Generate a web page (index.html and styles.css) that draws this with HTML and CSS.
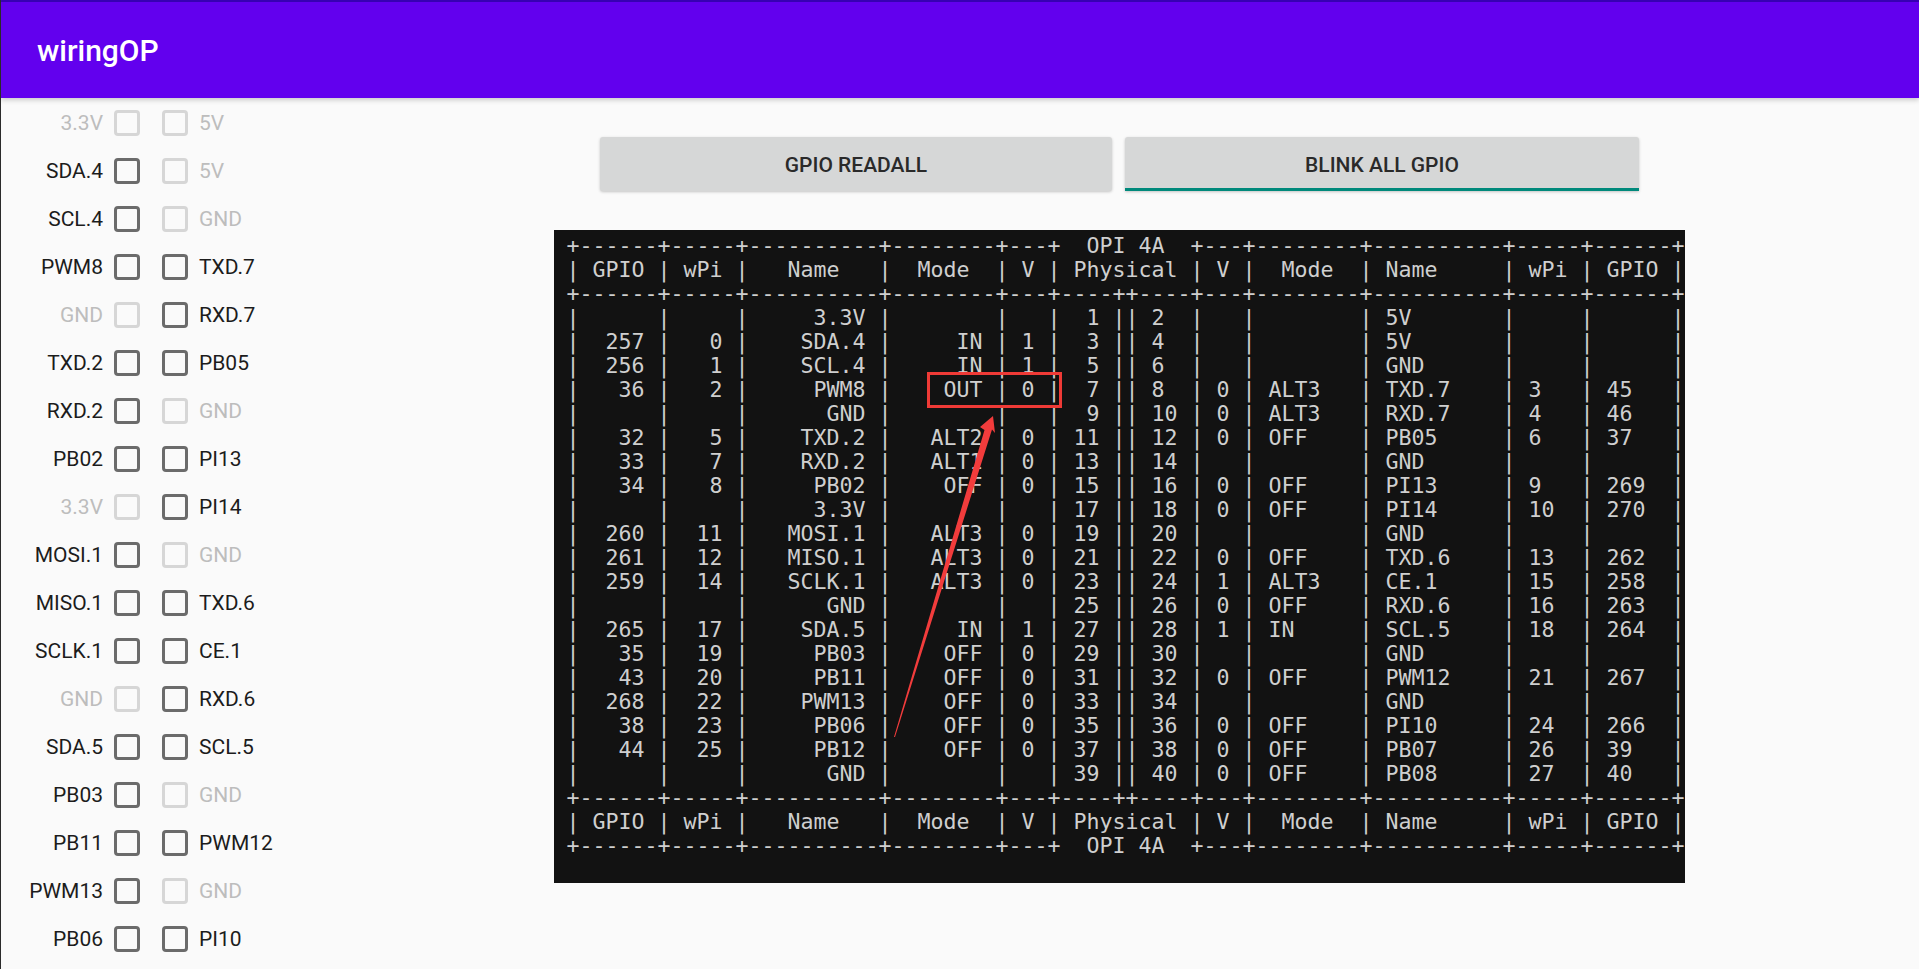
FILE: index.html
```html
<!DOCTYPE html>
<html lang="en">
<head>
<meta charset="utf-8">
<title>wiringOP</title>
<link rel="stylesheet" href="styles.css">
</head>
<body>
<header class="appbar"><h1 class="title">wiringOP</h1></header>
<main class="main">
<section class="pins">
<div class="pin"><span class="lbl off">3.3V</span><span class="box off"></span><span class="box off"></span><span class="lbl off">5V</span></div>
<div class="pin"><span class="lbl">SDA.4</span><span class="box"></span><span class="box off"></span><span class="lbl off">5V</span></div>
<div class="pin"><span class="lbl">SCL.4</span><span class="box"></span><span class="box off"></span><span class="lbl off">GND</span></div>
<div class="pin"><span class="lbl">PWM8</span><span class="box"></span><span class="box"></span><span class="lbl">TXD.7</span></div>
<div class="pin"><span class="lbl off">GND</span><span class="box off"></span><span class="box"></span><span class="lbl">RXD.7</span></div>
<div class="pin"><span class="lbl">TXD.2</span><span class="box"></span><span class="box"></span><span class="lbl">PB05</span></div>
<div class="pin"><span class="lbl">RXD.2</span><span class="box"></span><span class="box off"></span><span class="lbl off">GND</span></div>
<div class="pin"><span class="lbl">PB02</span><span class="box"></span><span class="box"></span><span class="lbl">PI13</span></div>
<div class="pin"><span class="lbl off">3.3V</span><span class="box off"></span><span class="box"></span><span class="lbl">PI14</span></div>
<div class="pin"><span class="lbl">MOSI.1</span><span class="box"></span><span class="box off"></span><span class="lbl off">GND</span></div>
<div class="pin"><span class="lbl">MISO.1</span><span class="box"></span><span class="box"></span><span class="lbl">TXD.6</span></div>
<div class="pin"><span class="lbl">SCLK.1</span><span class="box"></span><span class="box"></span><span class="lbl">CE.1</span></div>
<div class="pin"><span class="lbl off">GND</span><span class="box off"></span><span class="box"></span><span class="lbl">RXD.6</span></div>
<div class="pin"><span class="lbl">SDA.5</span><span class="box"></span><span class="box"></span><span class="lbl">SCL.5</span></div>
<div class="pin"><span class="lbl">PB03</span><span class="box"></span><span class="box off"></span><span class="lbl off">GND</span></div>
<div class="pin"><span class="lbl">PB11</span><span class="box"></span><span class="box"></span><span class="lbl">PWM12</span></div>
<div class="pin"><span class="lbl">PWM13</span><span class="box"></span><span class="box off"></span><span class="lbl off">GND</span></div>
<div class="pin"><span class="lbl">PB06</span><span class="box"></span><span class="box"></span><span class="lbl">PI10</span></div>
</section>
<section class="content">
<div class="actions">
<button class="btn" type="button">GPIO READALL</button>
<button class="btn focused" type="button">BLINK ALL GPIO</button>
</div>
<div class="terminal">
<pre class="table">+------+-----+----------+--------+---+  OPI 4A  +---+--------+----------+-----+------+
| GPIO | wPi |   Name   |  Mode  | V | Physical | V |  Mode  | Name     | wPi | GPIO |
+------+-----+----------+--------+---+----++----+---+--------+----------+-----+------+
|      |     |     3.3V |        |   |  1 || 2  |   |        | 5V       |     |      |
|  257 |   0 |    SDA.4 |     IN | 1 |  3 || 4  |   |        | 5V       |     |      |
|  256 |   1 |    SCL.4 |     IN | 1 |  5 || 6  |   |        | GND      |     |      |
|   36 |   2 |     PWM8 |    OUT | 0 |  7 || 8  | 0 | ALT3   | TXD.7    | 3   | 45   |
|      |     |      GND |        |   |  9 || 10 | 0 | ALT3   | RXD.7    | 4   | 46   |
|   32 |   5 |    TXD.2 |   ALT2 | 0 | 11 || 12 | 0 | OFF    | PB05     | 6   | 37   |
|   33 |   7 |    RXD.2 |   ALT1 | 0 | 13 || 14 |   |        | GND      |     |      |
|   34 |   8 |     PB02 |    OFF | 0 | 15 || 16 | 0 | OFF    | PI13     | 9   | 269  |
|      |     |     3.3V |        |   | 17 || 18 | 0 | OFF    | PI14     | 10  | 270  |
|  260 |  11 |   MOSI.1 |   ALT3 | 0 | 19 || 20 |   |        | GND      |     |      |
|  261 |  12 |   MISO.1 |   ALT3 | 0 | 21 || 22 | 0 | OFF    | TXD.6    | 13  | 262  |
|  259 |  14 |   SCLK.1 |   ALT3 | 0 | 23 || 24 | 1 | ALT3   | CE.1     | 15  | 258  |
|      |     |      GND |        |   | 25 || 26 | 0 | OFF    | RXD.6    | 16  | 263  |
|  265 |  17 |    SDA.5 |     IN | 1 | 27 || 28 | 1 | IN     | SCL.5    | 18  | 264  |
|   35 |  19 |     PB03 |    OFF | 0 | 29 || 30 |   |        | GND      |     |      |
|   43 |  20 |     PB11 |    OFF | 0 | 31 || 32 | 0 | OFF    | PWM12    | 21  | 267  |
|  268 |  22 |    PWM13 |    OFF | 0 | 33 || 34 |   |        | GND      |     |      |
|   38 |  23 |     PB06 |    OFF | 0 | 35 || 36 | 0 | OFF    | PI10     | 24  | 266  |
|   44 |  25 |     PB12 |    OFF | 0 | 37 || 38 | 0 | OFF    | PB07     | 26  | 39   |
|      |     |      GND |        |   | 39 || 40 | 0 | OFF    | PB08     | 27  | 40   |
+------+-----+----------+--------+---+----++----+---+--------+----------+-----+------+
| GPIO | wPi |   Name   |  Mode  | V | Physical | V |  Mode  | Name     | wPi | GPIO |
+------+-----+----------+--------+---+  OPI 4A  +---+--------+----------+-----+------+</pre>
<div class="callout"></div>
<svg class="arrow" viewBox="0 0 110 330" width="110" height="330" aria-hidden="true">
<polygon points="2,322 92.5,15 88,12 101,1 103,18 100,14.5 3,322"/>
</svg>
</div>
</section>
</main>
</body>
</html>
```
FILE: styles.css
```css
* { box-sizing: border-box; }
html, body { margin: 0; height: 100%; overflow: hidden; }
body {
  background: #fafafa;
  font-family: Roboto, "Liberation Sans", sans-serif;
  display: flex;
  flex-direction: column;
  border-left: 1px solid #2b2b2b;
}
.appbar {
  flex: none;
  height: 98px;
  background: #6200ee;
  border-top: 2px solid #3700b3;
  display: flex;
  align-items: center;
  padding-left: 36px;
  box-shadow: 0 2px 5px rgba(0,0,0,.2);
  position: relative;
  z-index: 1;
}
.title { margin: 0; color: #fff; font-size: 30px; font-weight: 500; }
.main { flex: 1; display: flex; min-height: 0; }
.pins { flex: none; width: 553px; padding-top: 1px; display: flex; flex-direction: column; }
.pin {
  flex: none;
  height: 48px;
  display: grid;
  grid-template-columns: 113px 48px 26px auto;
  align-items: center;
}
.lbl { font-size: 21px; color: #1c1c1c; }
.lbl:first-child { text-align: right; padding-right: 11px; }
.lbl:last-child { padding-left: 11px; }
.lbl.off { color: #bdbdbd; }
.box { width: 26px; height: 26px; border: 3px solid #6b6b6b; border-radius: 4px; }
.box.off { border-color: #d6d6d6; }
.content { flex: 1; min-width: 0; }
.actions { display: flex; gap: 13px; margin: 39px 0 0 46px; }
.btn {
  width: 512px;
  height: 54px;
  border: 0;
  border-radius: 3px;
  background: #d6d7d7;
  color: #2a2a2a;
  font: 500 21px Roboto, sans-serif;
  padding: 1px 0 0;
  box-shadow: 0 1px 3px rgba(0,0,0,.22);
}
.btn.focused { width: 514px; border-bottom: 3px solid #00897b; border-radius: 3px 3px 0 0; padding-top: 4px; }
.terminal {
  position: relative;
  width: 1131px;
  height: 653px;
  margin-top: 39px;
  padding: 4px 0 0 12.5px;
  background: #121212;
}
.table {
  margin: 0;
  color: #cfcfcf;
  font: 21.6px/24px "DejaVu Sans Mono", monospace;
}
.callout {
  position: absolute;
  left: 373px;
  top: 142px;
  width: 135px;
  height: 36px;
  border: 3px solid #ef3a36;
}
.arrow { position: absolute; left: 338px; top: 185px; overflow: visible; }
.arrow polygon { fill: #f23c3c; }
```
